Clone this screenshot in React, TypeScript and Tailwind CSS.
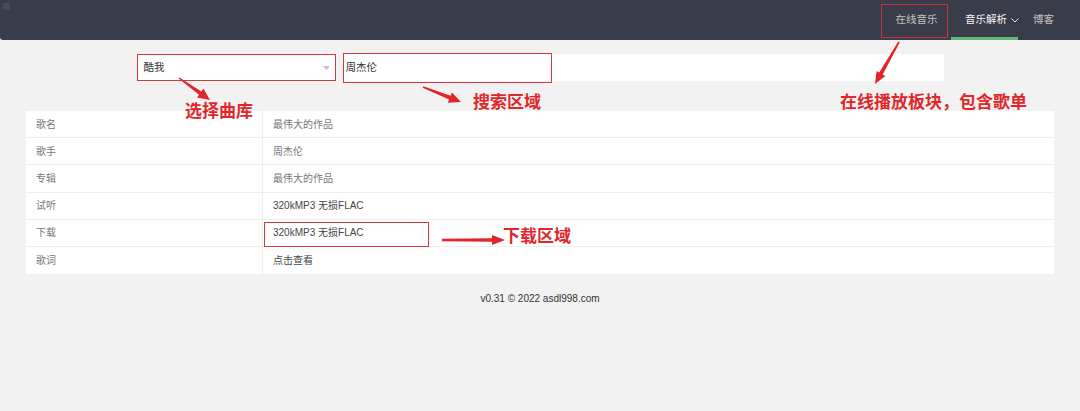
import React from "react"

const rows = [
  { label: "歌名", value: "最伟大的作品" },
  { label: "歌手", value: "周杰伦" },
  { label: "专辑", value: "最伟大的作品" },
  { label: "试听", value: "320kMP3 无损FLAC", link: true },
  { label: "下载", value: "320kMP3 无损FLAC", link: true },
  { label: "歌词", value: "点击查看", link: true },
]

// tapered arrow from (x1,y1) to (x2,y2)
function arrowPoints(x1: number, y1: number, x2: number, y2: number, tail: number, shaft: number, headLen: number, headW: number) {
  const dx = x2 - x1
  const dy = y2 - y1
  const len = Math.hypot(dx, dy)
  const ux = dx / len
  const uy = dy / len
  const nx = -uy
  const ny = ux
  const bx = x2 - ux * headLen
  const by = y2 - uy * headLen
  const pts = [
    [x1 + nx * tail / 2, y1 + ny * tail / 2],
    [bx + nx * shaft / 2, by + ny * shaft / 2],
    [bx + nx * headW / 2, by + ny * headW / 2],
    [x2, y2],
    [bx - nx * headW / 2, by - ny * headW / 2],
    [bx - nx * shaft / 2, by - ny * shaft / 2],
    [x1 - nx * tail / 2, y1 - ny * tail / 2],
  ]
  return pts.map((p) => `${p[0].toFixed(1)},${p[1].toFixed(1)}`).join(" ")
}

function Annotations() {
  return (
    <>
      <svg className="pointer-events-none absolute left-0 top-0" width="1080" height="411">
        <polygon points={arrowPoints(179, 78, 210, 100, 1.5, 4, 12, 11)} fill="#e0262b" />
        <polygon points={arrowPoints(423, 87, 461, 102, 1.5, 4, 12, 11)} fill="#e0262b" />
        <polygon points={arrowPoints(899, 42, 875, 84, 1.5, 4, 12, 10)} fill="#e0262b" />
        <polygon points={arrowPoints(442, 240, 505, 240, 2.5, 3.5, 13, 10)} fill="#e0262b" />
      </svg>

      <div className="pointer-events-none absolute left-[343px] top-[53px] h-[30px] w-[209px] border-[1.5px] border-[#d23a3f]" />
      <div className="pointer-events-none absolute left-[881px] top-[4px] h-[34px] w-[67px] border-[1.5px] border-[#c9343a]" />
      <div className="pointer-events-none absolute left-[264px] top-[222px] h-[25px] w-[165px] border-[1.5px] border-[#d23a3f]" />

      <div className="absolute left-[185px] top-[103px] text-[17px] font-bold leading-none text-[#e0262b]">选择曲库</div>
      <div className="absolute left-[473px] top-[94px] text-[17px] font-bold leading-none text-[#e0262b]">搜索区域</div>
      <div className="absolute left-[840px] top-[94px] text-[17px] font-bold leading-none text-[#e0262b]">在线播放板块，包含歌单</div>
      <div className="absolute left-[503px] top-[228px] text-[17px] font-bold leading-none text-[#e0262b]">下载区域</div>
    </>
  )
}

export default function App() {
  return (
    <div
      className="relative h-[411px] w-[1080px] overflow-hidden bg-[#f2f2f2]"
      style={{ fontFamily: '"Liberation Sans", "Noto Sans CJK SC", sans-serif' }}
    >
      <header className="flex h-10 items-start justify-between rounded-bl-[3px] bg-[#393d49]">
        <div className="m-[3px] h-[7px] w-[7px] rounded-[1px] bg-[#474b56]" />
        <nav className="mr-[13px] flex h-10 shrink-0 items-stretch whitespace-nowrap text-[10.5px]">
          <div className="flex w-[69px] shrink-0 items-center justify-center text-[#c2c2c2]">在线音乐</div>
          <div className="relative flex w-[67px] shrink-0 items-center pl-[14px] text-[#f5f5f5]">
            <span>音乐解析</span>
            <svg className="ml-[4px] shrink-0" width="8" height="5" viewBox="0 0 8 5">
              <path d="M0.5 0.5 L4 4 L7.5 0.5" fill="none" stroke="#e6e6e6" strokeWidth="1" />
            </svg>
            <span className="absolute bottom-0 left-0 h-[3px] w-full bg-[#5fb878]" />
          </div>
          <div className="flex w-[49px] shrink-0 items-center pl-[15px] text-[#c2c2c2]">博客</div>
        </nav>
      </header>

      <div className="mx-auto mt-[14px] flex h-[27px] w-[807px] gap-[7px]">
        <div className="flex w-[199px] items-center justify-between border-[1.5px] border-[#d23a3f] bg-white pl-[6px] pr-[5px] text-[10.5px] text-[#333]">
          <span>酷我</span>
          <svg width="7" height="4" viewBox="0 0 7 4">
            <path d="M0 0 L7 0 L3.5 4 Z" fill="#c2c2c2" />
          </svg>
        </div>
        <div className="flex flex-1 items-center bg-white pl-[3px] text-[10.5px] text-[#333]">周杰伦</div>
      </div>

      <div className="mx-auto mt-[30px] w-[1028px] bg-white text-[10px] text-[#666]">
        {rows.map((row, i) => (
          <div
            key={row.label}
            className={`flex h-[27.2px] items-center ${i < rows.length - 1 ? "border-b border-[#eeeeee]" : ""}`}
          >
            <div className="flex h-full w-[237px] items-center border-r border-[#eeeeee] pl-[10px] text-[#777]">{row.label}</div>
            <div className={`pl-[10px] ${row.link ? "text-[#444]" : "text-[#777]"}`}>{row.value}</div>
          </div>
        ))}
      </div>

      <div className="mt-[20px] text-center text-[10px] leading-[10px] text-[#333]">v0.31 © 2022 asdl998.com</div>

      <Annotations />
    </div>
  )
}
